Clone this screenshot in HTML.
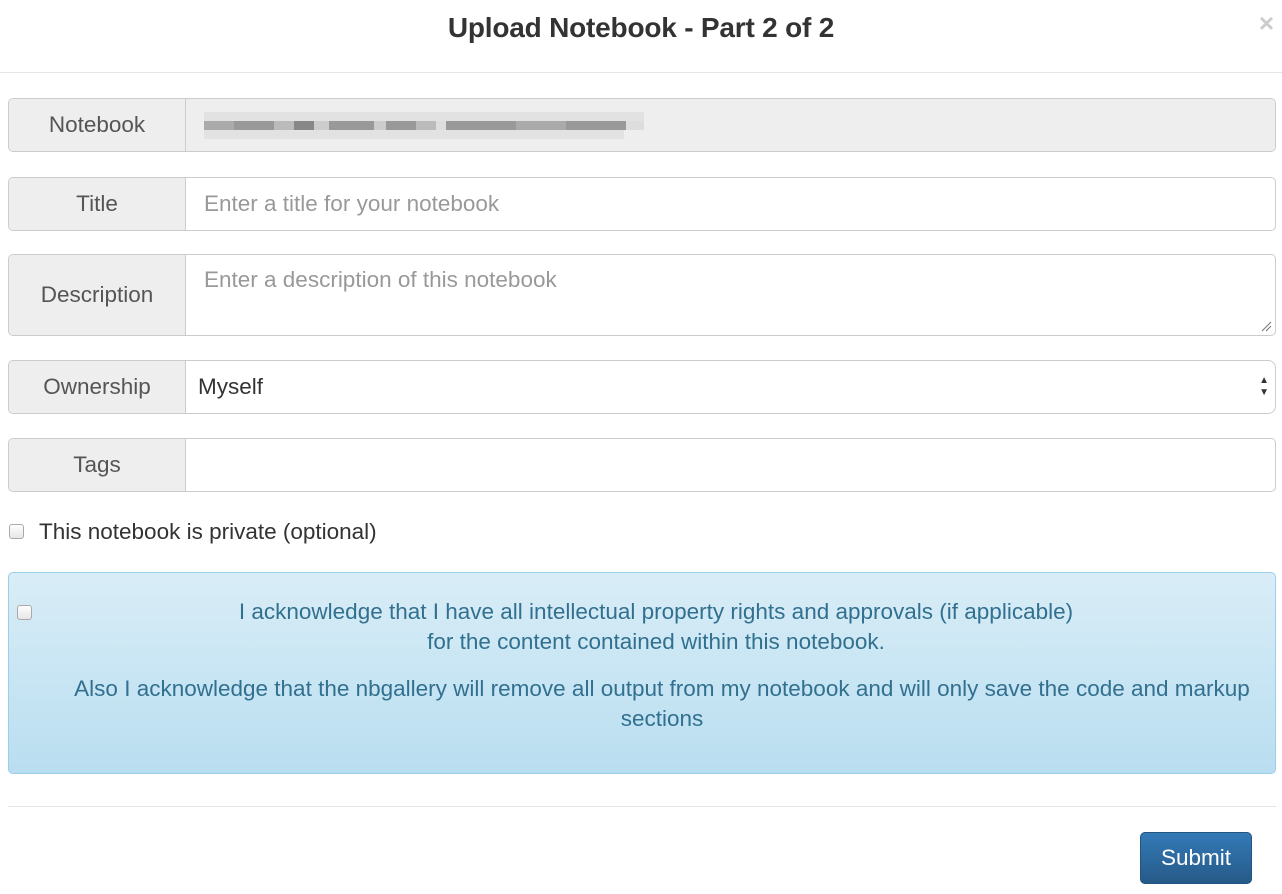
<!DOCTYPE html>
<html><head><meta charset="utf-8">
<style>
*{box-sizing:border-box}
body{margin:0;width:1282px;height:894px;background:#fff;font-family:"Liberation Sans",sans-serif;position:relative;overflow:hidden;color:#333}
.h{position:absolute;top:0;left:0;right:0;height:73px;border-bottom:1px solid #e5e5e5}
.h h1{margin:0;position:absolute;top:12px;width:100%;text-align:center;font-size:28px;font-weight:bold;color:#333;letter-spacing:-0.2px}
.x{position:absolute;right:8px;top:8px;font-size:26px;color:#ccc;font-weight:bold}
.row{position:absolute;left:8px;width:1268px;display:flex;border:1px solid #ccc;border-radius:5px;overflow:hidden}
.lab{width:177px;background:#eee;border-right:1px solid #ccc;display:flex;align-items:center;justify-content:center;font-size:22.5px;color:#555}
.inp{flex:1;font-size:22.5px;color:#999;padding-left:18px;display:flex;align-items:center}
.blur{display:flex;flex-direction:column}
.blur div{display:flex;height:9px}
.blur span{display:inline-block;height:9px}
.cb{position:absolute;width:15px;height:15px;border:1px solid #aaa;border-radius:3px;background:linear-gradient(#fff,#e6e6e6)}
.alert{position:absolute;left:8px;top:572px;width:1268px;height:202px;border:1px solid #9acfea;border-radius:5px;background:linear-gradient(#d9edf7,#b9def0);color:#31708f;font-size:22.5px;text-align:center}
.btn{position:absolute;left:1140px;top:832px;width:112px;height:52px;border-radius:5px;background:linear-gradient(#337ab7,#265a88);border:1px solid #245580;color:#fff;font-size:22.5px;display:flex;align-items:center;justify-content:center}
</style></head><body>
<div class="h"><h1>Upload Notebook - Part 2 of 2</h1><div class="x">×</div></div>

<div class="row" style="top:98px;height:54px">
<div class="lab">Notebook</div>
<div class="inp" style="background:#eee;padding-left:18px"><div class="blur">
<div><span style="background:#e2e2e2;width:440px"></span></div>
<div><span style="background:#aaa;width:30px"></span><span style="background:#999;width:40px"></span><span style="background:#bbb;width:20px"></span><span style="background:#888;width:20px"></span><span style="background:#ccc;width:15px"></span><span style="background:#999;width:45px"></span><span style="background:#ccc;width:12px"></span><span style="background:#999;width:30px"></span><span style="background:#bbb;width:20px"></span><span style="background:#ddd;width:10px"></span><span style="background:#999;width:70px"></span><span style="background:#aaa;width:50px"></span><span style="background:#999;width:60px"></span><span style="background:#ddd;width:18px"></span></div>
<div><span style="background:#e2e2e2;width:420px"></span></div>
</div></div></div>

<div class="row" style="top:177px;height:54px">
<div class="lab">Title</div><div class="inp">Enter a title for your notebook</div></div>

<div class="row" style="top:254px;height:82px">
<div class="lab">Description</div><div class="inp" style="align-items:flex-start;padding-top:12px;position:relative">Enter a description of this notebook
<svg style="position:absolute;right:3px;bottom:3px" width="12" height="12"><path d="M2 11L11 2M6 11L11 6" stroke="#777" stroke-width="1"/></svg></div></div>

<div class="row" style="top:360px;height:54px;border-radius:5px 8px 8px 5px">
<div class="lab">Ownership</div><div class="inp" style="color:#333;padding-left:12px;position:relative">Myself<span style="position:absolute;right:6px;top:14px;font-size:10px;line-height:12px;color:#333">▲<br>▼</span></div></div>

<div class="row" style="top:438px;height:54px">
<div class="lab">Tags</div><div class="inp"></div></div>

<div class="cb" style="left:9px;top:524px"></div>
<div style="position:absolute;left:39px;top:519px;font-size:22.5px;color:#333">This notebook is private (optional)</div>

<div class="alert">
<div class="cb" style="left:8px;top:32px"></div>
<div style="position:absolute;top:24px;left:28px;right:0;line-height:30px">I acknowledge that I have all intellectual property rights and approvals (if applicable)<br>for the content contained within this notebook.</div>
<div style="position:absolute;top:101px;left:40px;right:0;line-height:30px;padding:0 10px">Also I acknowledge that the nbgallery will remove all output from my notebook and will only save the code and markup sections</div>
</div>

<div style="position:absolute;left:8px;width:1268px;top:806px;border-top:1px solid #e5e5e5"></div>
<div class="btn">Submit</div>
</body></html>
